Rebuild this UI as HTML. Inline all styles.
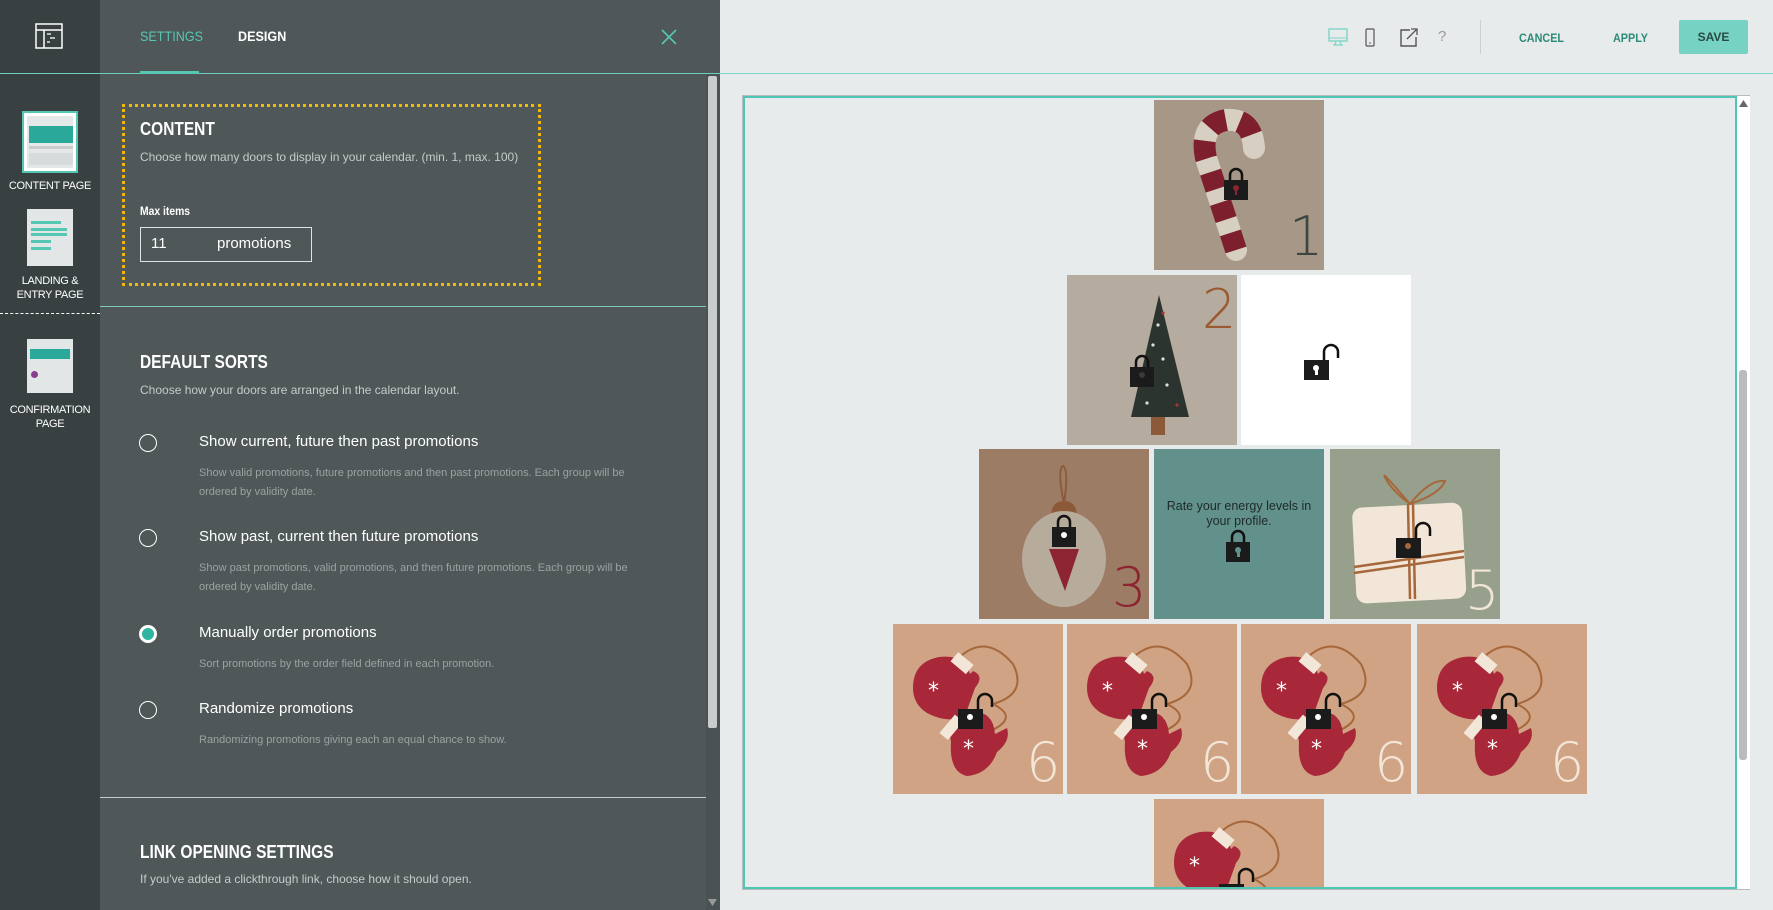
<!DOCTYPE html>
<html><head><meta charset="utf-8"><style>
*{margin:0;padding:0;box-sizing:border-box}
html,body{width:1773px;height:910px;overflow:hidden}
body{background:#e7ebec;font-family:"Liberation Sans",sans-serif;position:relative}
.a{position:absolute}
.c{transform:scaleX(0.9);transform-origin:0 0;white-space:nowrap}
.side{left:0;top:0;width:100px;height:910px;background:#394042}
.panel{left:100px;top:0;width:620px;height:910px;background:#4f5758}
.lbl{color:#fff;font-size:11px;text-align:center;width:100px;left:0;line-height:14px;letter-spacing:-0.3px}
.h{color:#fff;font-weight:bold;font-size:18px;transform:scaleX(0.86);transform-origin:0 0;white-space:nowrap}
.d{color:#c5cbcb;font-size:12px;white-space:nowrap}
.sd{color:#9aa2a2;font-size:11px;line-height:19px;white-space:nowrap}
.rl{color:#fff;font-size:15px;white-space:nowrap}
.radio{width:18px;height:18px;border-radius:50%;border:1.5px solid #fff}
.tile{width:170px;height:170px;overflow:hidden}
.tile svg{position:absolute;left:0;top:0}
.num{position:absolute;font-family:"DejaVu Sans",sans-serif;font-weight:200;font-size:54px;line-height:54px}
.btn{color:#2c8a78;font-weight:bold;font-size:12px}
</style></head><body>
<div class="a side"></div>
<div class="a panel"></div>
<div class="a" style="left:0;top:73px;width:720px;height:1px;background:#6fd0c0"></div>
<div class="a" style="left:720px;top:73px;width:1053px;height:1px;background:#7fd6c8"></div>
<svg class="a" style="left:35px;top:23px" width="28" height="26" viewBox="0 0 28 26"><rect x="1" y="1" width="26" height="24" fill="none" stroke="#fff" stroke-width="1.5"/><line x1="1" y1="7" x2="27" y2="7" stroke="#fff" stroke-width="1.5"/><line x1="9" y1="7" x2="9" y2="25" stroke="#fff" stroke-width="1.5"/><line x1="12" y1="11" x2="16" y2="11" stroke="#fff" stroke-width="1.3"/><line x1="15" y1="15" x2="20" y2="15" stroke="#fff" stroke-width="1.3"/><line x1="12" y1="19" x2="15" y2="19" stroke="#fff" stroke-width="1.3"/></svg>
<div class="a c" style="left:140px;top:28px;color:#55c7b3;font-size:14px">SETTINGS</div>
<div class="a" style="left:140px;top:71px;width:59px;height:3px;background:#55c7b3"></div>
<div class="a c" style="left:238px;top:28px;color:#fff;font-size:14px;font-weight:bold">DESIGN</div>
<svg class="a" style="left:661px;top:29px" width="16" height="16"><path d="M1 1L15 15M15 1L1 15" stroke="#55c7b3" stroke-width="1.6"/></svg>
<div class="a" style="left:22px;top:111px;width:56px;height:62px;border:2px solid #55c7b3;background:#fff;padding:3px">
<div style="background:#e5e8e8;height:52px;position:relative"><div class="a" style="left:2px;top:10px;width:44px;height:17px;background:#2aa99a"></div><div class="a" style="left:2px;top:30px;width:44px;height:3px;background:#ccc"></div><div class="a" style="left:2px;top:37px;width:44px;height:12px;background:#d8dbdb"></div></div></div>
<div class="a lbl" style="top:179px">CONTENT PAGE</div>
<div class="a" style="left:27px;top:209px;width:46px;height:57px;background:#e3e6e6"><div class="a" style="left:4px;top:12px;width:30px;height:3px;background:#55c7b3"></div><div class="a" style="left:4px;top:19px;width:36px;height:3px;background:#55c7b3"></div><div class="a" style="left:4px;top:24px;width:36px;height:3px;background:#55c7b3"></div><div class="a" style="left:4px;top:31px;width:20px;height:3px;background:#55c7b3"></div><div class="a" style="left:4px;top:38px;width:20px;height:3px;background:#55c7b3"></div></div>
<div class="a lbl" style="top:274px">LANDING &amp;<br>ENTRY PAGE</div>
<div class="a" style="left:0;top:313px;width:100px;border-top:1px dashed #fff"></div>
<div class="a" style="left:27px;top:339px;width:46px;height:54px;background:#e3e6e6"><div class="a" style="left:3px;top:10px;width:40px;height:10px;background:#2aa99a"></div><div class="a" style="left:4px;top:32px;width:7px;height:7px;border-radius:50%;background:#8a3c8e"></div></div>
<div class="a lbl" style="top:403px">CONFIRMATION<br>PAGE</div>
<div class="a" style="left:706px;top:74px;width:14px;height:836px;background:#4a5253"></div>
<div class="a" style="left:708px;top:76px;width:9px;height:652px;background:#c9cccc;border-radius:2px"></div>
<div class="a" style="left:122px;top:104px;width:419px;height:182px;border:3px dotted #f2b900"></div>
<div class="a h" style="left:140px;top:119px">CONTENT</div>
<div class="a d" style="left:140px;top:150px">Choose how many doors to display in your calendar. (min. 1, max. 100)</div>
<div class="a c" style="left:140px;top:206px;color:#fff;font-size:11.5px;font-weight:bold">Max items</div>
<div class="a" style="left:140px;top:227px;width:172px;height:35px;border:1px solid #dfe3e3"></div>
<div class="a" style="left:151px;top:235px;color:#fff;font-size:15px">11</div>
<div class="a" style="left:217px;top:235px;color:#fff;font-size:15px">promotions</div>
<div class="a" style="left:100px;top:306px;width:606px;height:1px;background:#7fc9be"></div>
<div class="a h" style="left:140px;top:352px">DEFAULT SORTS</div>
<div class="a d" style="left:140px;top:383px">Choose how your doors are arranged in the calendar layout.</div>
<div class="a radio" style="left:139px;top:434px"></div>
<div class="a rl" style="left:199px;top:433px">Show current, future then past promotions</div>
<div class="a sd" style="left:199px;top:464px">Show valid promotions, future promotions and then past promotions. Each group will be<br>ordered by validity date.</div>
<div class="a radio" style="left:139px;top:529px"></div>
<div class="a rl" style="left:199px;top:528px">Show past, current then future promotions</div>
<div class="a sd" style="left:199px;top:559px">Show past promotions, valid promotions, and then future promotions. Each group will be<br>ordered by validity date.</div>
<div class="a radio" style="left:139px;top:625px;border:none;background:#fff"><div class="a" style="left:3px;top:3px;width:12px;height:12px;border-radius:50%;background:#2fb5a2"></div></div>
<div class="a rl" style="left:199px;top:624px">Manually order promotions</div>
<div class="a sd" style="left:199px;top:655px">Sort promotions by the order field defined in each promotion.</div>
<div class="a radio" style="left:139px;top:701px"></div>
<div class="a rl" style="left:199px;top:700px">Randomize promotions</div>
<div class="a sd" style="left:199px;top:731px">Randomizing promotions giving each an equal chance to show.</div>
<div class="a" style="left:100px;top:797px;width:606px;height:1px;background:#c8cccc"></div>
<div class="a h" style="left:140px;top:842px">LINK OPENING SETTINGS</div>
<div class="a d" style="left:140px;top:872px">If you've added a clickthrough link, choose how it should open.</div>
<svg class="a" style="left:1328px;top:28px" width="20" height="19"><rect x="1" y="1" width="18" height="12" fill="none" stroke="#7fd6c8" stroke-width="1.4"/><line x1="1" y1="10" x2="19" y2="10" stroke="#7fd6c8"/><path d="M8 13L7 17M12 13L13 17M5 17H15" stroke="#7fd6c8" stroke-width="1.3" fill="none"/></svg>
<svg class="a" style="left:1365px;top:28px" width="10" height="19"><rect x="1" y="1" width="8" height="17" rx="1" fill="none" stroke="#555" stroke-width="1.2"/><circle cx="5" cy="15" r="0.8" fill="#555"/></svg>
<svg class="a" style="left:1399px;top:27px" width="20" height="20"><path d="M11 3H2V19H17V10" fill="none" stroke="#555" stroke-width="1.4"/><path d="M8 12L18 2M12 2H18V8" fill="none" stroke="#555" stroke-width="1.3"/></svg>
<div class="a" style="left:1438px;top:28px;color:#999;font-size:15px">?</div>
<div class="a" style="left:1480px;top:20px;width:1px;height:34px;background:#ccd0d0"></div>
<div class="a btn c" style="left:1519px;top:31px">CANCEL</div>
<div class="a btn c" style="left:1613px;top:31px">APPLY</div>
<div class="a" style="left:1679px;top:20px;width:69px;height:34px;background:#76d2c2;border-radius:2px;color:#2a4a45;font-size:12px;font-weight:bold;text-align:center;line-height:34px">SAVE</div>
<div class="a" style="left:742px;top:95px;width:1008px;height:795px;border:1px solid #b8bcbc"></div>
<div class="a" style="left:743px;top:96px;width:994px;height:793px;border:2px solid #4fc6b3;overflow:hidden">
<div style="position:absolute;left:-745px;top:-98px;width:1773px;height:1000px">
<div class="a tile" style="left:1154px;top:100px;background:#a69787">
<svg width="170" height="170"><path d="M82 150 L52 58 Q45 25 72 20 Q98 18 100 48" fill="none" stroke="#d8cfc3" stroke-width="22" stroke-linecap="round"/><path d="M82 150 L52 58 Q45 25 72 20 Q98 18 100 48" fill="none" stroke="#7d1f2c" stroke-width="22" stroke-dasharray="18 14"/>
<g transform="translate(70,68)"><path d="M6 12V7a6 6 0 0 1 12 0v5" fill="none" stroke="#111" stroke-width="2.5"/><rect x="0" y="12" width="24" height="20" fill="#1b1b1b"/><circle cx="12" cy="20" r="3" fill="#8c2431"/><rect x="11" y="21" width="2" height="6" fill="#8c2431"/></g></svg>
<div class="num" style="left:135px;top:110px;color:#3c4540">1</div></div>
<div class="a tile" style="left:1067px;top:275px;background:#b5ac9f">
<svg width="170" height="170"><polygon points="92,20 64,142 122,142" fill="#2c342f"/><rect x="84" y="142" width="14" height="18" fill="#8c5a38"/><g fill="#ddd"><circle cx="91" cy="50" r="1.6"/><circle cx="86" cy="70" r="1.6"/><circle cx="96" cy="84" r="1.6"/><circle cx="100" cy="110" r="1.6"/><circle cx="80" cy="128" r="1.6"/></g><g fill="#a33"><circle cx="96" cy="38" r="1.6"/><circle cx="83" cy="100" r="1.6"/><circle cx="110" cy="130" r="1.6"/></g>
<g transform="translate(63,80)"><path d="M6 12V7a6 6 0 0 1 12 0v5" fill="none" stroke="#111" stroke-width="2.5"/><rect x="0" y="12" width="24" height="20" fill="#1b1b1b"/><circle cx="12" cy="20" r="3" fill="#3a3a3a"/></g></svg>
<div class="num" style="left:135px;top:8px;color:#9a5a30">2</div></div>
<div class="a tile" style="left:1241px;top:275px;background:#fff">
<svg width="170" height="170"><g transform="translate(63,67)"><path d="M20 18V10a7 7 0 0 1 14 0v6" fill="none" stroke="#111" stroke-width="2.5"/><rect x="0" y="18" width="25" height="20" fill="#1b1b1b"/><circle cx="12" cy="26" r="3" fill="#fff"/><rect x="11" y="27" width="3" height="6" fill="#fff"/></g></svg></div>
<div class="a tile" style="left:979px;top:449px;background:#9d7c65">
<svg width="170" height="170"><path d="M85 55 Q78 20 84 17 Q90 20 85 55" fill="none" stroke="#8c5a38" stroke-width="2"/><path d="M72 68 Q72 52 85 52 Q98 52 98 68Z" fill="#8c5a38"/><ellipse cx="85" cy="110" rx="42" ry="48" fill="#b7ab9c"/><polygon points="70,100 100,100 86,142" fill="#8c2431"/>
<g transform="translate(73,66)"><path d="M6 12V7a6 6 0 0 1 12 0v5" fill="none" stroke="#111" stroke-width="2.5"/><rect x="0" y="12" width="24" height="20" fill="#1b1b1b"/><circle cx="12" cy="20" r="3" fill="#fff"/></g></svg>
<div class="num" style="left:133px;top:112px;color:#8c2431">3</div></div>
<div class="a tile" style="left:1154px;top:449px;background:#62908a">
<div class="a" style="left:10px;top:50px;width:150px;text-align:center;font-size:12.5px;color:#1d2b2a;line-height:15px">Rate your energy levels in your profile.</div>
<svg width="170" height="170"><g transform="translate(72,81)"><path d="M6 12V7a6 6 0 0 1 12 0v5" fill="none" stroke="#111" stroke-width="2.5"/><rect x="0" y="12" width="24" height="20" fill="#1b1b1b"/><circle cx="12" cy="20" r="3" fill="#62908a"/><rect x="11" y="21" width="3" height="6" fill="#62908a"/></g></svg></div>
<div class="a tile" style="left:1330px;top:449px;background:#96a08d">
<svg width="170" height="170"><rect x="24" y="56" width="110" height="96" rx="10" fill="#f1e6d7" transform="rotate(-3 80 100)"/><path d="M80 55 Q50 20 55 28 Q60 40 80 55 Q100 30 115 32 Q110 45 80 55" fill="none" stroke="#a6683a" stroke-width="2"/><path d="M78 55 L80 150 M83 55 L85 150 M24 118 L134 102 M24 124 L134 108" stroke="#a6683a" stroke-width="2.5"/>
<g transform="translate(66,71)"><path d="M20 18V10a7 7 0 0 1 14 0v6" fill="none" stroke="#111" stroke-width="2.5"/><rect x="0" y="18" width="25" height="20" fill="#1b1b1b"/><circle cx="12" cy="26" r="3" fill="#a6683a"/></g></svg>
<div class="num" style="left:135px;top:115px;color:#f1e6d7">5</div></div>
<div class="a tile mt" style="left:893px;top:624px;background:#d0a385"></div>
<div class="a tile mt" style="left:1067px;top:624px;background:#d0a385"></div>
<div class="a tile mt" style="left:1241px;top:624px;background:#d0a385"></div>
<div class="a tile mt" style="left:1417px;top:624px;background:#d0a385"></div>
<div class="a tile mt" style="left:1154px;top:799px;background:#d0a385"></div>
</div></div>
<template id="mt"><svg width="170" height="170"><path d="M60 40 Q90 5 120 40 Q135 70 100 80 Q130 95 90 110" fill="none" stroke="#a6683a" stroke-width="2"/><path d="M20 64 Q20 38 46 33 Q72 30 77 50 L80 47 Q92 52 82 64 L72 92 Q55 100 34 89 Q20 80 20 64Z" fill="#a8283a"/><rect x="58" y="32" width="20" height="12" fill="#f1e6d7" transform="rotate(40 67 40)"/><path d="M58 118 Q53 95 75 88 Q100 85 102 110 L114 104 Q118 117 104 128 Q96 150 74 152 Q56 148 58 118Z" fill="#a8283a"/><rect x="46" y="98" width="24" height="11" fill="#f1e6d7" transform="rotate(-50 58 103)"/><text x="35" y="74" fill="#fff" font-size="22" font-family="DejaVu Sans">*</text><text x="70" y="132" fill="#fff" font-size="22" font-family="DejaVu Sans">*</text><g transform="translate(65,67)"><path d="M20 18V10a7 7 0 0 1 14 0v6" fill="none" stroke="#111" stroke-width="2.5"/><rect x="0" y="18" width="25" height="20" fill="#1b1b1b"/><circle cx="12" cy="26" r="3" fill="#fff"/></g></svg><div class="num" style="left:133px;top:112px;color:#f1e6d7">6</div></template>
<script>
var t=document.getElementById('mt').innerHTML;
document.querySelectorAll('.mt').forEach(function(e){e.innerHTML=t;});
</script>
<div class="a" style="left:1737px;top:96px;width:13px;height:793px;background:#fff"></div>
<svg class="a" style="left:1739px;top:100px" width="9" height="7"><polygon points="4.5,0 9,7 0,7" fill="#666"/></svg>
<div class="a" style="left:1739px;top:370px;width:8px;height:390px;background:#bbb;border-radius:3px"></div>
<svg class="a" style="left:708px;top:899px" width="9" height="7"><polygon points="0,0 9,0 4.5,7" fill="#999"/></svg>
</body></html>
